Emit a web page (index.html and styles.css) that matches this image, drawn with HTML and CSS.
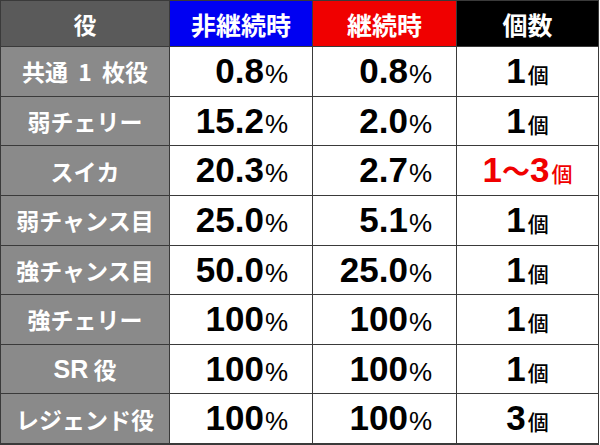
FILE: index.html
```html
<!DOCTYPE html>
<html lang="ja">
<head>
<meta charset="utf-8">
<title>役別確率</title>
<link rel="stylesheet" href="styles.css">
</head>
<body>
<div class="table">
  <div class="cell head role">役</div>
  <div class="cell head blue">非継続時</div>
  <div class="cell head red">継続時</div>
  <div class="cell head black">個数</div>

  <div class="cell role spaced">共通 1 枚役</div>
  <div class="cell pct"><span class="num">0.8</span><span class="unit">%</span></div>
  <div class="cell pct"><span class="num">0.8</span><span class="unit">%</span></div>
  <div class="cell cnt"><span class="num">1</span><span class="ko">個</span></div>

  <div class="cell role">弱チェリー</div>
  <div class="cell pct"><span class="num">15.2</span><span class="unit">%</span></div>
  <div class="cell pct"><span class="num">2.0</span><span class="unit">%</span></div>
  <div class="cell cnt"><span class="num">1</span><span class="ko">個</span></div>

  <div class="cell role">スイカ</div>
  <div class="cell pct"><span class="num">20.3</span><span class="unit">%</span></div>
  <div class="cell pct"><span class="num">2.7</span><span class="unit">%</span></div>
  <div class="cell cnt hot"><span class="num">1</span><span class="wave">〜</span><span class="num">3</span><span class="ko">個</span></div>

  <div class="cell role">弱チャンス目</div>
  <div class="cell pct"><span class="num">25.0</span><span class="unit">%</span></div>
  <div class="cell pct"><span class="num">5.1</span><span class="unit">%</span></div>
  <div class="cell cnt"><span class="num">1</span><span class="ko">個</span></div>

  <div class="cell role">強チャンス目</div>
  <div class="cell pct"><span class="num">50.0</span><span class="unit">%</span></div>
  <div class="cell pct"><span class="num">25.0</span><span class="unit">%</span></div>
  <div class="cell cnt"><span class="num">1</span><span class="ko">個</span></div>

  <div class="cell role">強チェリー</div>
  <div class="cell pct"><span class="num">100</span><span class="unit">%</span></div>
  <div class="cell pct"><span class="num">100</span><span class="unit">%</span></div>
  <div class="cell cnt"><span class="num">1</span><span class="ko">個</span></div>

  <div class="cell role"><span class="latin">SR</span>&nbsp;役</div>
  <div class="cell pct"><span class="num">100</span><span class="unit">%</span></div>
  <div class="cell pct"><span class="num">100</span><span class="unit">%</span></div>
  <div class="cell cnt"><span class="num">1</span><span class="ko">個</span></div>

  <div class="cell role">レジェンド役</div>
  <div class="cell pct"><span class="num">100</span><span class="unit">%</span></div>
  <div class="cell pct"><span class="num">100</span><span class="unit">%</span></div>
  <div class="cell cnt"><span class="num">3</span><span class="ko">個</span></div>
</div>
</body>
</html>
```
FILE: styles.css
```css
html, body {
  margin: 0;
  padding: 0;
  background: #ffffff;
}

.table {
  width: 599px;
  height: 445px;
  box-sizing: border-box;
  padding: 1px 0 2px 1px;
  display: grid;
  grid-template-columns: 168px 142px 143px 141px;
  grid-template-rows: 45px repeat(8, 1fr);
  gap: 1px;
  background: #3a3a3a;
  font-family: "Liberation Sans", "Noto Sans CJK JP", sans-serif;
}

.cell {
  display: flex;
  align-items: center;
  background: #ffffff;
  color: #000000;
  white-space: nowrap;
}

.head {
  justify-content: center;
  color: #ffffff;
  font-family: "Noto Sans CJK JP", sans-serif;
  font-weight: 700;
  font-size: 25px;
}

.head.role { background: #5a5a5a; }
.blue { background: #0000f2; }
.red { background: #f00000; }
.black { background: #000000; }

.role {
  justify-content: center;
  background: #8a8a8a;
  color: #ffffff;
  font-family: "Noto Sans CJK JP", sans-serif;
  font-weight: 700;
  font-size: 23px;
}

.spaced { word-spacing: 5px; }

.latin {
  font-family: "Liberation Sans", sans-serif;
  font-weight: 700;
  font-size: 25px;
}

.pct {
  justify-content: flex-end;
  padding-right: 24px;
  align-items: baseline;
  padding-top: 4px;
  box-sizing: border-box;
}

.cnt {
  justify-content: center;
  align-items: baseline;
  padding-top: 4px;
  box-sizing: border-box;
}

.num {
  font-family: "Liberation Sans", sans-serif;
  font-weight: 700;
  font-size: 35px;
}

.unit {
  font-family: "Liberation Sans", sans-serif;
  font-weight: 400;
  font-size: 26px;
  margin-left: 1px;
}

.ko {
  font-family: "Noto Sans CJK JP", sans-serif;
  font-weight: 500;
  font-size: 21px;
  margin-left: 2px;
}

.hot { color: #f00000; }

.wave {
  font-family: "Noto Sans CJK JP", sans-serif;
  font-weight: 700;
  font-size: 28px;
}
```
